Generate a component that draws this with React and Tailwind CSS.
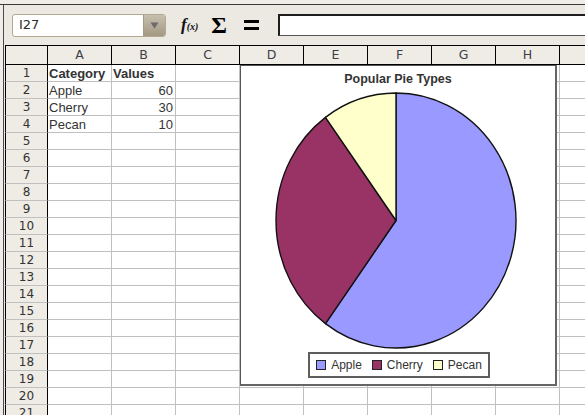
const COLS = ['A', 'B', 'C', 'D', 'E', 'F', 'G', 'H', 'I', 'J']
const ROWS = Array.from({ length: 21 }, (_, i) => i + 1)

const CELLS = {
  1: [{ v: 'Category', bold: true }, { v: 'Values', bold: true }],
  2: [{ v: 'Apple' }, { v: '60', num: true }],
  3: [{ v: 'Cherry' }, { v: '30', num: true }],
  4: [{ v: 'Pecan' }, { v: '10', num: true }],
}

const LEGEND = [
  { label: 'Apple', color: 'bg-[#9999ff]' },
  { label: 'Cherry', color: 'bg-[#993366]' },
  { label: 'Pecan', color: 'bg-[#ffffcc]' },
]

function Toolbar() {
  return (
    <div className="flex items-center h-[40px]">
      {/* name box */}
      <div className="ml-[8px] flex h-[23px] w-[154px] rounded-[3px] border border-[#b3a993] bg-white overflow-hidden">
        <div className="flex-1 flex items-center pl-[6px] text-[13px] text-[#2b2b2b] font-['DejaVu_Sans',sans-serif]">I27</div>
        <div className="w-[22px] flex items-center justify-center border-l border-[#a39a86] bg-gradient-to-b from-[#c7bfae] to-[#a39881]">
          <svg width="9" height="7" viewBox="0 0 9 7"><path d="M0.5 0.5 L8.5 0.5 L4.5 6.5 Z" fill="#6b6b6b" /></svg>
        </div>
      </div>

      {/* function wizard */}
      <div className="ml-[15px] flex items-baseline font-['Liberation_Serif',serif] italic font-bold text-[#111]">
        <span className="text-[17px]">f</span>
        <span className="text-[10px]">(x)</span>
      </div>

      {/* sum */}
      <div className="ml-[13px] font-['Liberation_Serif',serif] font-bold text-[24px] leading-none text-black">Σ</div>

      {/* equals */}
      <div className="ml-[17px] flex flex-col gap-[4px] w-[15px]">
        <div className="h-[3px] bg-black" />
        <div className="h-[3px] bg-black" />
      </div>

      {/* input line */}
      <div className="ml-[19px] flex-1 h-[22px] bg-white border-l-2 border-t-2 border-b border-[#1e1e1e] border-b-[#555]" />
    </div>
  )
}

function PieChart() {
  // apple 60%, cherry 30%, pecan 10%, clockwise from top
  const apple = 'M155,130.5 L155,3 A120,127.5 0 1 1 84.46,233.65 Z'
  const cherry = 'M155,130.5 L84.46,233.65 A120,127.5 0 0 1 84.46,27.35 Z'
  const pecan = 'M155,130.5 L84.46,27.35 A120,127.5 0 0 1 155,3 Z'
  return (
    <div className="absolute left-[235px] top-[20px] w-[317px] h-[321px] bg-white border-l border-t border-[#555] border-r-2 border-b-2 border-r-[#666] border-b-[#666] font-['Liberation_Sans',sans-serif]">
      <div className="h-[24px] pt-[6px] text-center text-[12.5px] leading-[14px] font-bold text-[#333]">Popular Pie Types</div>
      <svg width="314" height="262" viewBox="0 0 314 262" className="block">
        <path d={apple} fill="#9999ff" stroke="#111" strokeWidth="1.4" strokeLinejoin="round" />
        <path d={cherry} fill="#993366" stroke="#111" strokeWidth="1.4" strokeLinejoin="round" />
        <path d={pecan} fill="#ffffcc" stroke="#111" strokeWidth="1.4" strokeLinejoin="round" />
      </svg>
      <div className="flex justify-center pl-[2px]">
        <div className="flex items-center gap-[10px] h-[26px] px-[6px] border-2 border-[#5e5e5e]">
          {LEGEND.map(l => (
            <div key={l.label} className="flex items-center gap-[5px]">
              <div className={`w-[10px] h-[10px] border border-[#222] ${l.color}`} />
              <span className="text-[12px] leading-none text-[#333]">{l.label}</span>
            </div>
          ))}
        </div>
      </div>
    </div>
  )
}

function Sheet() {
  return (
    <div className="relative ml-px bg-white">
      {/* column headers */}
      <div className="flex h-[20px] border-y border-black bg-[#efebe5]">
        <div className="w-[43px] shrink-0 border-x border-black" />
        {COLS.map(c => (
          <div key={c} className="w-[64px] shrink-0 border-r border-black flex items-center justify-center text-[12.5px] text-[#3b3f47] font-['DejaVu_Sans',sans-serif]">
            {c}
          </div>
        ))}
      </div>

      {ROWS.map(r => (
        <div key={r} className="flex h-[17px]">
          <div className="w-[43px] shrink-0 border-l border-l-black border-r border-r-black border-b border-b-[#c0c0c0] bg-[#efebe5] flex items-center justify-center text-[12px] text-[#333] font-['DejaVu_Sans',sans-serif]">
            {r}
          </div>
          {COLS.map((c, i) => {
            const cell = CELLS[r]?.[i]
            return (
              <div key={c}
                className={`w-[64px] shrink-0 border-r border-b border-[#c0c0c0] flex items-center text-[13px] leading-none text-[#333] font-['Liberation_Sans',sans-serif] ${cell?.num ? 'justify-end pr-[2px]' : 'pl-[1px]'} ${cell?.bold ? 'font-bold' : ''}`}>
                {cell?.v}
              </div>
            )
          })}
        </div>
      ))}

      <PieChart />
    </div>
  )
}

export default function App() {
  return (
    <div className="w-[585px] h-[415px] overflow-hidden bg-[#ece9e3]">
      <div className="h-[4px] bg-[#f0ede8]" />
      <div className="flex border-t border-[#3a3a3a]">
        <div className="w-[3px] shrink-0 bg-[#f0ede8]" />
        <div className="flex-1 min-w-0 border-l border-[#4a4a4a] overflow-hidden">
          <Toolbar />
          <Sheet />
        </div>
      </div>
    </div>
  )
}
